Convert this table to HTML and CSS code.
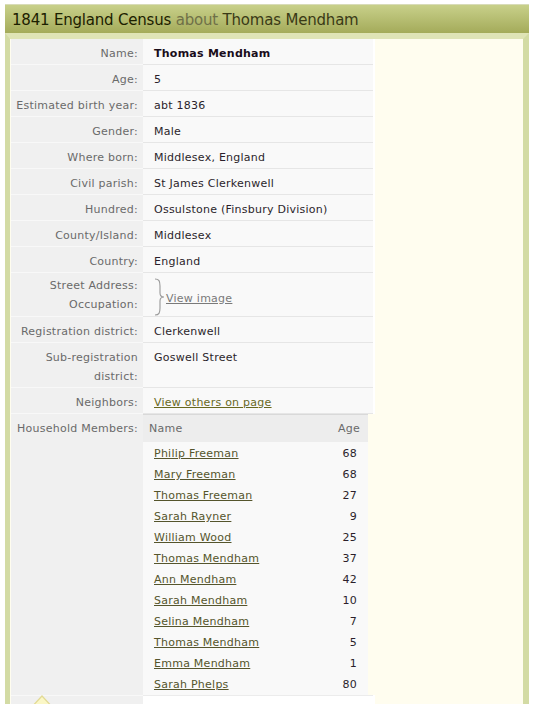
FILE: index.html
```html
<!DOCTYPE html>
<html>
<head>
<meta charset="utf-8">
<link rel="stylesheet" href="styles.css">
</head>
<body>
<div class="panel">
  <h1 class="panel-title"><span class="t-main">1841 England Census</span> <span class="t-about">about</span> <span class="t-name">Thomas Mendham</span></h1>
  <div class="panel-body">
    <table class="record">
      <tr><th>Name:</th><td><b class="strong">Thomas Mendham</b></td></tr>
      <tr><th>Age:</th><td>5</td></tr>
      <tr><th>Estimated birth year:</th><td>abt 1836</td></tr>
      <tr><th>Gender:</th><td>Male</td></tr>
      <tr><th>Where born:</th><td>Middlesex, England</td></tr>
      <tr><th>Civil parish:</th><td>St James Clerkenwell</td></tr>
      <tr><th>Hundred:</th><td>Ossulstone (Finsbury Division)</td></tr>
      <tr><th>County/Island:</th><td>Middlesex</td></tr>
      <tr><th>Country:</th><td>England</td></tr>
      <tr class="two"><th>Street Address:<br>Occupation:</th><td class="mid"><span class="brace-wrap"><svg class="brace" width="12" height="38" viewBox="0 0 12 38"><path d="M1 1 C5 1 6 3 6 8 L6 15 C6 18 7 19 10 19 C7 19 6 20 6 23 L6 30 C6 35 5 37 1 37" fill="none" stroke="#999" stroke-width="1.1"/></svg><a class="grey-link" href="#">View image</a></span></td></tr>
      <tr><th>Registration district:</th><td>Clerkenwell</td></tr>
      <tr><th>Sub-registration district:</th><td>Goswell Street</td></tr>
      <tr><th>Neighbors:</th><td><a class="link" href="#">View others on page</a></td></tr>
      <tr class="hh"><th>Household Members:</th><td class="hh-cell">
        <table class="members">
          <thead><tr><th class="m-name">Name</th><th class="m-age">Age</th></tr></thead>
          <tbody>
            <tr><td><a href="#">Philip Freeman</a></td><td class="age">68</td></tr>
            <tr><td><a href="#">Mary Freeman</a></td><td class="age">68</td></tr>
            <tr><td><a href="#">Thomas Freeman</a></td><td class="age">27</td></tr>
            <tr><td><a href="#">Sarah Rayner</a></td><td class="age">9</td></tr>
            <tr><td><a href="#">William Wood</a></td><td class="age">25</td></tr>
            <tr><td><a href="#">Thomas Mendham</a></td><td class="age">37</td></tr>
            <tr><td><a href="#">Ann Mendham</a></td><td class="age">42</td></tr>
            <tr><td><a href="#">Sarah Mendham</a></td><td class="age">10</td></tr>
            <tr><td><a href="#">Selina Mendham</a></td><td class="age">7</td></tr>
            <tr><td><a href="#">Thomas Mendham</a></td><td class="age">5</td></tr>
            <tr><td><a href="#">Emma Mendham</a></td><td class="age">1</td></tr>
            <tr><td><a href="#">Sarah Phelps</a></td><td class="age">80</td></tr>
          </tbody>
        </table>
      </td></tr>
      <tr class="more"><th><span class="tip"><svg width="28" height="16" viewBox="0 0 28 16"><path d="M1 16 L14 2 L27 16" fill="#fbf7c6" stroke="#e2da95" stroke-width="1.2"/></svg></span></th><td class="blank"></td></tr>
    </table>
  </div>
</div>
</body>
</html>
```

FILE: styles.css
```css
html, body {
  margin: 0;
  padding: 0;
  background: #ffffff;
}
body {
  font-family: "DejaVu Sans", Verdana, sans-serif;
  font-size: 11px;
  letter-spacing: 0.25px;
  color: #2b1f2b;
}
.panel {
  margin: 4px 4px 0 5px;
  width: 524px;
}
.panel-title {
  margin: 0;
  height: 29px;
  line-height: 30px;
  padding-left: 7px;
  font-weight: normal;
  font-size: 15px;
  font-family: "DejaVu Sans", Tahoma, sans-serif;
  background: linear-gradient(#c8d08a, #a4ab5a);
  border-top: 1px solid #d8dcb8;
  box-sizing: border-box;
  letter-spacing: -0.2px;
}
.t-main { color: #1c2000; }
.t-about { color: #6f7048; }
.t-name { color: #3a3a16; }
.panel-body {
  background: #fffdef;
  border-left: 5px solid #d3dba4;
  border-right: 6px solid #d3dba4;
  border-top: 6px solid #dfe4b6;
  padding-left: 1px;
  height: 700px;
}
.record {
  border-collapse: collapse;
  width: 364px;
}
.record > tbody > tr > th {
  width: 132px;
  box-sizing: border-box;
  text-align: right;
  font-weight: normal;
  color: #6a6a6a;
  background: #f0f0f0;
  padding: 5px 5px 1px 4px;
  line-height: 19px;
  vertical-align: top;
  border-bottom: 1px solid #f8f8f8;
}
.record > tbody > tr.two > th {
  padding-top: 3px;
  padding-bottom: 2px;
}
.record > tbody > tr > td {
  background: #f9f9f9;
  padding: 5px 6px 1px 11px;
  line-height: 19px;
  vertical-align: top;
  border-bottom: 1px solid #e6e6e6;
  border-right: 2px solid #ffffff;
}
.record > tbody > tr > td.mid {
  vertical-align: middle;
  padding-top: 4px;
  padding-bottom: 0;
}
.strong {
  font-weight: bold;
  color: #1a0d1a;
}
.brace-wrap {
  display: flex;
  align-items: center;
}
.brace {
  display: block;
  flex: none;
}
.grey-link {
  color: #7a7a7a;
  position: relative;
  top: 2px;
}
.link {
  color: #68681e;
}
.record > tbody > tr.hh > td.hh-cell {
  padding: 0;
  background: transparent;
  border-bottom: 1px solid #ececec;
  border-right: none;
}
.members {
  border-collapse: collapse;
  width: 225px;
  background: #f9f9f9;
  border-top: 1px solid #d9d9d9;
}
.members thead th {
  background: #ededed;
  font-weight: normal;
  color: #6a6a6a;
  line-height: 18px;
  padding: 5px 8px 4px 6px;
  text-align: left;
}
.members thead th.m-age {
  text-align: right;
}
.members tbody td {
  padding: 2px 11px 1px 11px;
  line-height: 18px;
}
.members tbody tr:first-child td {
  padding-top: 3px;
}
.members tbody td.age {
  text-align: right;
  color: #2b1f2b;
}
.members a {
  color: #55552c;
}
.record > tbody > tr.more > th {
  text-align: left;
  padding: 0 0 0 17px;
  height: 40px;
  vertical-align: top;
}
.record > tbody > tr.more > td.blank {
  background: #ffffff;
  border-bottom: none;
}
.tip {
  display: block;
  width: 28px;
  height: 16px;
  margin-top: -2px;
}
.tip svg {
  display: block;
}
```
